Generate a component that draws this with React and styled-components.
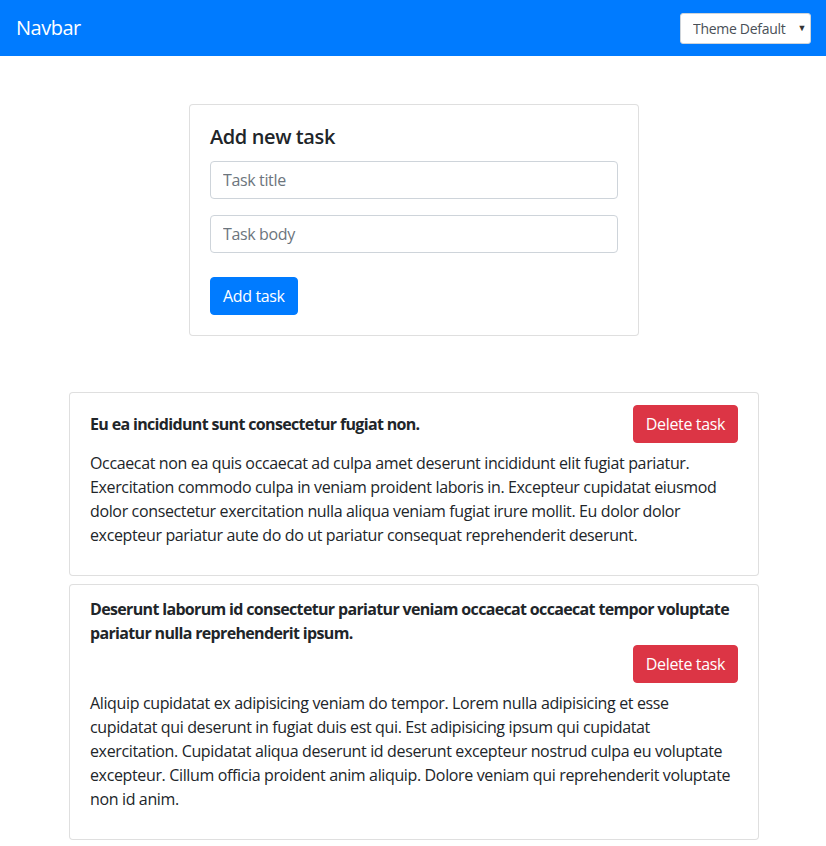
import React from "react";
import styled, { createGlobalStyle } from "styled-components";

const Global = createGlobalStyle`
  * { box-sizing: border-box; }
  body {
    margin: 0;
    font-family: "Open Sans", "Noto Sans", sans-serif;
    font-size: 16px;
    line-height: 1.5;
    letter-spacing: -0.36px;
    color: #212529;
    background: #fff;
  }
`;

const Nav = styled.nav`
  display: flex;
  align-items: center;
  justify-content: space-between;
  height: 56px;
  padding: 8px 15px 8px 16px;
  background: #007bff;
`;

const Brand = styled.a`
  color: #fff;
  font-size: 20px;
  line-height: 30px;
  letter-spacing: -0.5px;
  text-decoration: none;
`;

const SelectWrap = styled.div`
  position: relative;
  width: 131px;
  height: 31px;
`;

const Select = styled.select`
  appearance: none;
  width: 100%;
  height: 100%;
  padding: 0 20px 0 12px;
  font-family: inherit;
  font-size: 14px;
  letter-spacing: -0.3px;
  color: #495057;
  background: #fff;
  border: 1px solid #ced4da;
  border-radius: 3px;
`;

const Arrow = styled.span`
  position: absolute;
  right: 5px;
  top: 8px;
  font-size: 9px;
  color: #333;
  pointer-events: none;
`;

const Main = styled.main`
  max-width: 720px;
  margin: 0 auto;
  padding: 48px 14px 0 16px;
  display: flex;
  flex-direction: column;
  align-items: center;
`;

const Card = styled.div`
  width: ${(p) => p.$width || "100%"};
  border: 1px solid rgba(0, 0, 0, 0.125);
  border-radius: 4px;
  background: #fff;
  margin-bottom: ${(p) => p.$mb || "8px"};
`;

const FormBody = styled.form`
  padding: 20px;
  display: flex;
  flex-direction: column;
  align-items: flex-start;
`;

const FormTitle = styled.h5`
  margin: 0 0 12px;
  font-size: 20px;
  font-weight: 600;
  line-height: 1.2;
  letter-spacing: -0.4px;
`;

const Input = styled.input`
  width: 100%;
  height: 38px;
  margin-bottom: 16px;
  padding: 6px 12px;
  font-family: inherit;
  font-size: 16px;
  letter-spacing: -0.36px;
  color: #495057;
  border: 1px solid #ced4da;
  border-radius: 4px;
  &::placeholder { color: #6c757d; }
`;

const Button = styled.button`
  height: 38px;
  padding: 6px 12px;
  font-family: inherit;
  font-size: 16px;
  line-height: 24px;
  letter-spacing: -0.36px;
  color: #fff;
  background: ${(p) => (p.$variant === "danger" ? "#dc3545" : "#007bff")};
  border: 1px solid ${(p) => (p.$variant === "danger" ? "#dc3545" : "#007bff")};
  border-radius: 4px;
  margin-top: ${(p) => p.$mt || "0"};
  margin-left: ${(p) => p.$ml || "0"};
  cursor: pointer;
`;

const TaskBody = styled.div`
  padding: 12px 20px;
`;

const TaskHeader = styled.div`
  display: flex;
  flex-wrap: wrap;
  align-items: center;
  justify-content: space-between;
`;

const TaskTitle = styled.h6`
  margin: 0;
  font-size: 16px;
  font-weight: 700;
  line-height: 24px;
  letter-spacing: -0.66px;
`;

const TaskText = styled.p`
  margin: 8px 0 16px;
`;

const TaskList = styled.div`
  width: 100%;
  margin-top: 56px;
`;

const tasks = [
  {
    title: "Eu ea incididunt sunt consectetur fugiat non.",
    body: "Occaecat non ea quis occaecat ad culpa amet deserunt incididunt elit fugiat pariatur. Exercitation commodo culpa in veniam proident laboris in. Excepteur cupidatat eiusmod dolor consectetur exercitation nulla aliqua veniam fugiat irure mollit. Eu dolor dolor excepteur pariatur aute do do ut pariatur consequat reprehenderit deserunt.",
  },
  {
    title: "Deserunt laborum id consectetur pariatur veniam occaecat occaecat tempor voluptate pariatur nulla reprehenderit ipsum.",
    body: "Aliquip cupidatat ex adipisicing veniam do tempor. Lorem nulla adipisicing et esse cupidatat qui deserunt in fugiat duis est qui. Est adipisicing ipsum qui cupidatat exercitation. Cupidatat aliqua deserunt id deserunt excepteur nostrud culpa eu voluptate excepteur. Cillum officia proident anim aliquip. Dolore veniam qui reprehenderit voluptate non id anim.",
  },
];

export default function App() {
  return (
    <>
      <Global />
      <Nav>
        <Brand href="#">Navbar</Brand>
        <SelectWrap>
          <Select defaultValue="default">
            <option value="default">Theme Default</option>
          </Select>
          <Arrow>▼</Arrow>
        </SelectWrap>
      </Nav>
      <Main>
        <Card $width="450px" $mb="0">
          <FormBody onSubmit={(e) => e.preventDefault()}>
            <FormTitle>Add new task</FormTitle>
            <Input placeholder="Task title" />
            <Input placeholder="Task body" />
            <Button type="submit" $mt="8px">Add task</Button>
          </FormBody>
        </Card>
        <TaskList>
          {tasks.map((t, i) => (
            <Card key={i}>
              <TaskBody>
                <TaskHeader>
                  <TaskTitle>{t.title}</TaskTitle>
                  <Button $variant="danger" $ml="auto">Delete task</Button>
                </TaskHeader>
                <TaskText>{t.body}</TaskText>
              </TaskBody>
            </Card>
          ))}
        </TaskList>
      </Main>
    </>
  );
}
